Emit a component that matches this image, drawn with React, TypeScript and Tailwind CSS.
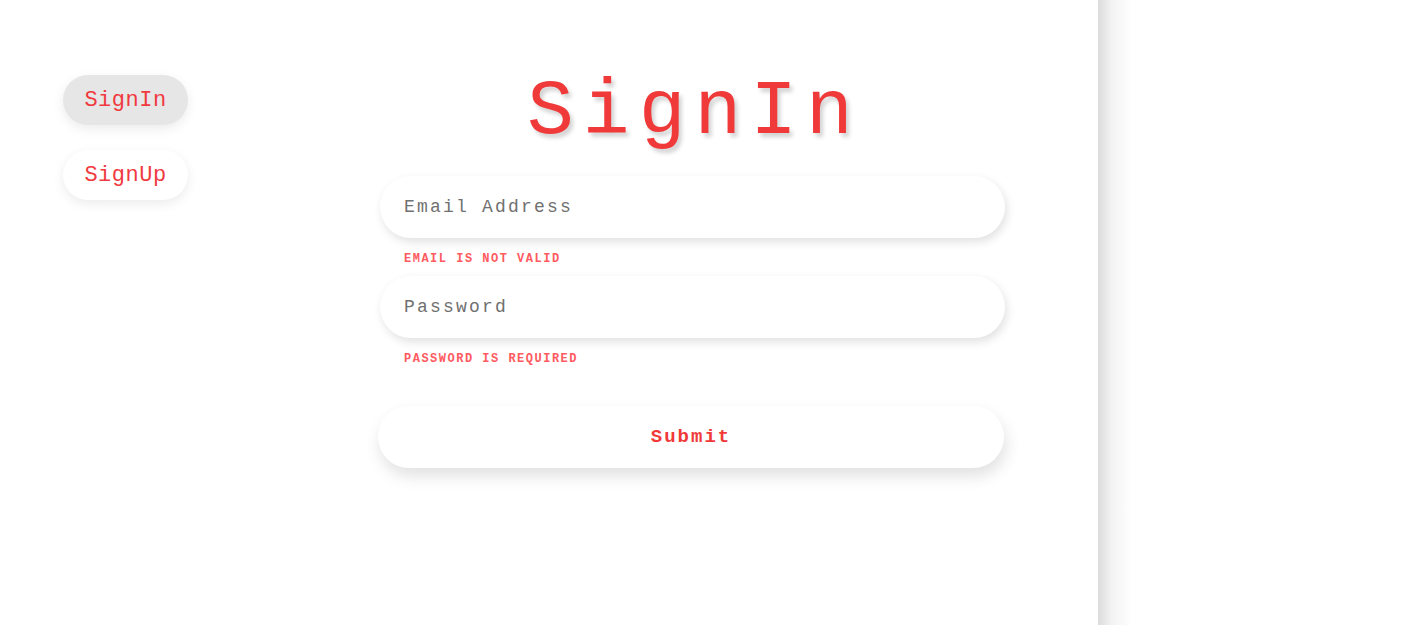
import React from "react";

const MONO = "font-['Liberation_Mono',_'DejaVu_Sans_Mono',_monospace]";

function NavButton({ label, active }: { label: string; active?: boolean }) {
  return (
    <button
      className={`w-[125px] h-[50px] rounded-full text-[22px] text-[#f03a3f] tracking-[0.5px] shadow-[0_4px_12px_rgba(0,0,0,0.08)] ${
        active ? "bg-[#e6e6e6]" : "bg-white"
      }`}
    >
      {label}
    </button>
  );
}

function Field({ placeholder, error, type = "text" }: { placeholder: string; error: string; type?: string }) {
  return (
    <div>
      <input
        type={type}
        placeholder={placeholder}
        className="w-[625px] h-[62px] rounded-full bg-white pl-[24px] text-[18px] tracking-[2.2px] text-[#555] placeholder:text-[#707070] shadow-[2px_4px_10px_rgba(0,0,0,0.12)] outline-none"
      />
      <p className="pl-[24px] mt-[12px] h-[26px] text-[12px] font-bold tracking-[1.5px] text-[#ff5a60]">{error}</p>
    </div>
  );
}

export default function App() {
  return (
    <div className={`flex min-h-[663px] bg-white ${MONO}`}>
      <div className="flex w-[1098px] shrink-0">
        <div className="w-[380px] shrink-0 pl-[63px] pt-[75px] flex flex-col gap-[25px]">
          <NavButton label="SignIn" active />
          <NavButton label="SignUp" />
        </div>
        <div className="w-[625px] pt-[62px] flex flex-col">
          <h1 className="text-center text-[78px] leading-[100px] tracking-[9px] pl-[4px] text-[#f03a3a] [text-shadow:3px_4px_4px_rgba(0,0,0,0.18)] mb-[14px]">
            SignIn
          </h1>
          <Field placeholder="Email Address" error="EMAIL IS NOT VALID" />
          <Field placeholder="Password" type="password" error="PASSWORD IS REQUIRED" />
          <button className="mt-[30px] -ml-[2px] w-[626px] h-[62px] rounded-full bg-white text-[19px] font-bold tracking-[2px] text-[#f03a3a] shadow-[2px_8px_16px_rgba(0,0,0,0.12)]">
            Submit
          </button>
        </div>
      </div>
      <div className="flex-1 bg-[linear-gradient(to_right,#dcdcdc,#f3f3f3_14px,#ffffff_34px)]" />
    </div>
  );
}
